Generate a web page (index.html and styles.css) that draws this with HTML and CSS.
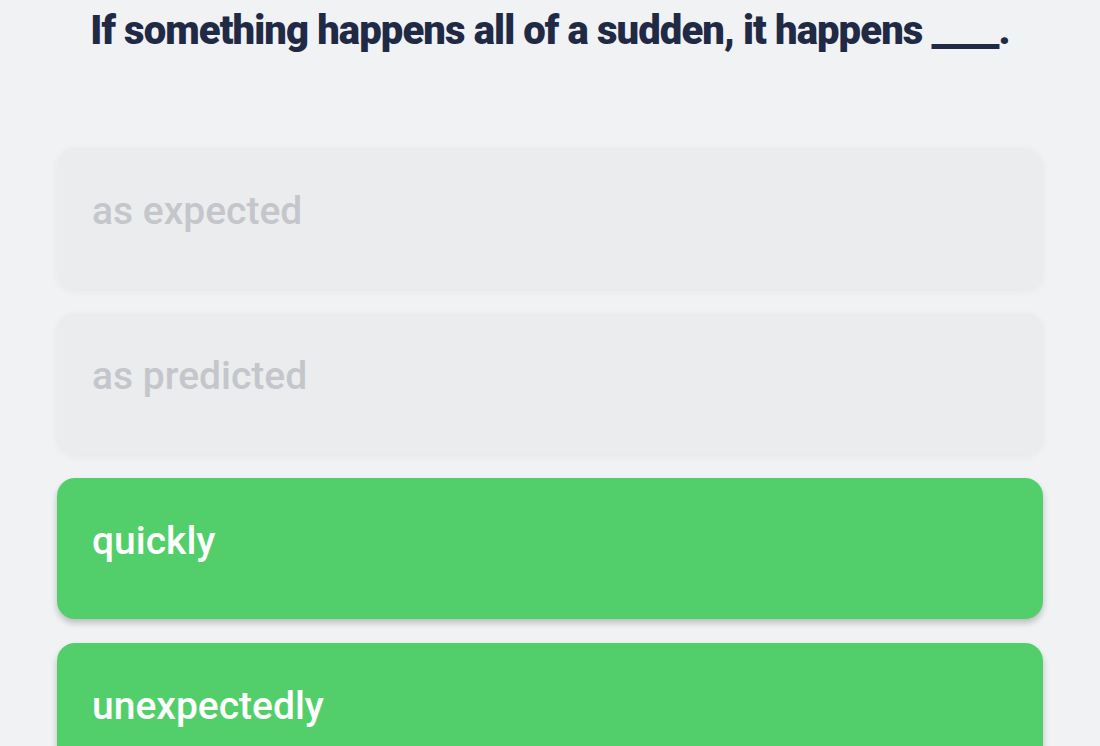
FILE: index.html
```html
<!DOCTYPE html>
<html lang="en">
<head>
<meta charset="utf-8">
<title>Quiz</title>
<link rel="stylesheet" href="styles.css">
</head>
<body>
<main class="quiz">
  <h1 class="question">If something happens all of a sudden, it happens ____.</h1>
  <ul class="answers">
    <li class="answer answer--dim">as expected</li>
    <li class="answer answer--dim">as predicted</li>
    <li class="answer answer--correct">quickly</li>
    <li class="answer answer--correct">unexpectedly</li>
  </ul>
</main>
</body>
</html>
```
FILE: styles.css
```css
html, body {
  margin: 0;
  padding: 0;
  background: #f1f2f4;
  font-family: Roboto, "Liberation Sans", sans-serif;
}
.quiz {
  padding: 0 57px;
  display: flex;
  flex-direction: column;
}
.question {
  margin: 0;
  padding-top: 5px;
  text-align: center;
  font-size: 40px;
  font-weight: 900;
  line-height: 52px;
  letter-spacing: -0.9px;
  color: #212a45;
}
.answers {
  list-style: none;
  margin: 91px 0 0;
  padding: 0;
  display: flex;
  flex-direction: column;
  gap: 24px;
}
.answer {
  box-sizing: border-box;
  height: 141px;
  padding: 36px 35px 0;
  border-radius: 18px;
  font-size: 39px;
  font-weight: 500;
  line-height: 54px;
}
.answer--dim {
  background: #ebecee;
  color: #c4c6cb;
  box-shadow: 0 2px 8px rgba(0, 0, 0, 0.05);
}
.answer--correct {
  background: #52cf6a;
  color: #ffffff;
  box-shadow: 0 4px 6px rgba(0, 0, 0, 0.22);
}
```
